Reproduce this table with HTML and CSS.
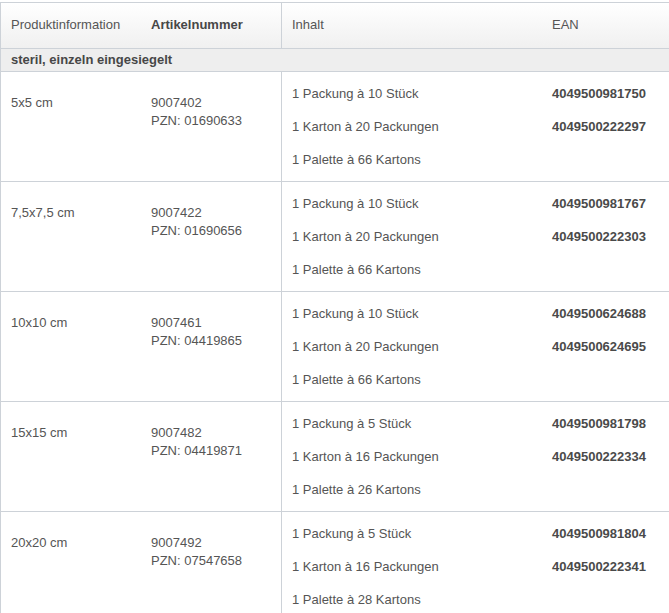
FILE: index.html
```html
<!DOCTYPE html>
<html lang="de">
<head>
<meta charset="utf-8">
<title>Produkttabelle</title>
<link rel="stylesheet" href="styles.css">
</head>
<body>
<table class="products">
  <colgroup>
    <col class="c1"><col class="c2"><col class="c3"><col class="c4">
  </colgroup>
  <thead>
    <tr class="head">
      <th class="h-plain">Produktinformation</th>
      <th class="h-bold">Artikelnummer</th>
      <th class="h-plain sep">Inhalt</th>
      <th class="h-plain">EAN</th>
    </tr>
  </thead>
  <tbody>
    <tr class="section"><td colspan="4">steril, einzeln eingesiegelt</td></tr>

    <tr class="item">
      <td class="info">5x5 cm</td>
      <td class="info">9007402<br>PZN: 01690633</td>
      <td class="list sep"><div class="ln">1 Packung à 10 Stück</div><div class="ln">1 Karton à 20 Packungen</div><div class="ln">1 Palette à 66 Kartons</div></td>
      <td class="list ean"><div class="ln">4049500981750</div><div class="ln">4049500222297</div></td>
    </tr>
    <tr class="item">
      <td class="info">7,5x7,5 cm</td>
      <td class="info">9007422<br>PZN: 01690656</td>
      <td class="list sep"><div class="ln">1 Packung à 10 Stück</div><div class="ln">1 Karton à 20 Packungen</div><div class="ln">1 Palette à 66 Kartons</div></td>
      <td class="list ean"><div class="ln">4049500981767</div><div class="ln">4049500222303</div></td>
    </tr>
    <tr class="item">
      <td class="info">10x10 cm</td>
      <td class="info">9007461<br>PZN: 04419865</td>
      <td class="list sep"><div class="ln">1 Packung à 10 Stück</div><div class="ln">1 Karton à 20 Packungen</div><div class="ln">1 Palette à 66 Kartons</div></td>
      <td class="list ean"><div class="ln">4049500624688</div><div class="ln">4049500624695</div></td>
    </tr>
    <tr class="item">
      <td class="info">15x15 cm</td>
      <td class="info">9007482<br>PZN: 04419871</td>
      <td class="list sep"><div class="ln">1 Packung à 5 Stück</div><div class="ln">1 Karton à 16 Packungen</div><div class="ln">1 Palette à 26 Kartons</div></td>
      <td class="list ean"><div class="ln">4049500981798</div><div class="ln">4049500222334</div></td>
    </tr>
    <tr class="item">
      <td class="info">20x20 cm</td>
      <td class="info">9007492<br>PZN: 07547658</td>
      <td class="list sep"><div class="ln">1 Packung à 5 Stück</div><div class="ln">1 Karton à 16 Packungen</div><div class="ln">1 Palette à 28 Kartons</div></td>
      <td class="list ean"><div class="ln">4049500981804</div><div class="ln">4049500222341</div></td>
    </tr>
  </tbody>
</table>
</body>
</html>
```

FILE: styles.css
```css
html, body {
  margin: 0;
  padding: 0;
  background: #ffffff;
}
body {
  padding-top: 2px;
  font-family: "Liberation Sans", Arial, Helvetica, sans-serif;
  font-size: 13px;
  line-height: 18px;
  color: #555555;
}
.products {
  width: 669px;
  table-layout: fixed;
  border-collapse: separate;
  border-spacing: 0;
  border-left: 1px solid #cdd2d8;
  border-top: 1px solid #cdd2d8;
}
.c1 { width: 140px; }
.c2 { width: 140px; }
.c3 { width: 261px; }
.c4 { width: auto; }

.products th,
.products td {
  padding: 0 10px;
  text-align: left;
  vertical-align: top;
  border-bottom: 1px solid #cdd2d8;
}
.products .sep {
  border-left: 1px solid #cdd2d8;
}

.head th {
  height: 43px;
  padding-top: 0;
  padding-bottom: 2px;
  vertical-align: middle;
  background: linear-gradient(#ffffff, #f0f0f0);
}
.h-plain {
  font-weight: normal;
  color: #555555;
}
.h-bold {
  font-weight: bold;
  color: #474747;
}

.section td {
  height: 18px;
  padding-top: 2px;
  padding-bottom: 2px;
  background: #eeeeee;
  font-weight: bold;
  color: #474747;
}

.item td {
  height: 110px;
  box-sizing: border-box;
}
.item .info {
  padding-top: 22px;
}
.item .list {
  padding-top: 13px;
}
.ln {
  margin-bottom: 15px;
}
.ln:last-child {
  margin-bottom: 0;
}
.ean {
  font-weight: bold;
  color: #4a4a4a;
}
```
